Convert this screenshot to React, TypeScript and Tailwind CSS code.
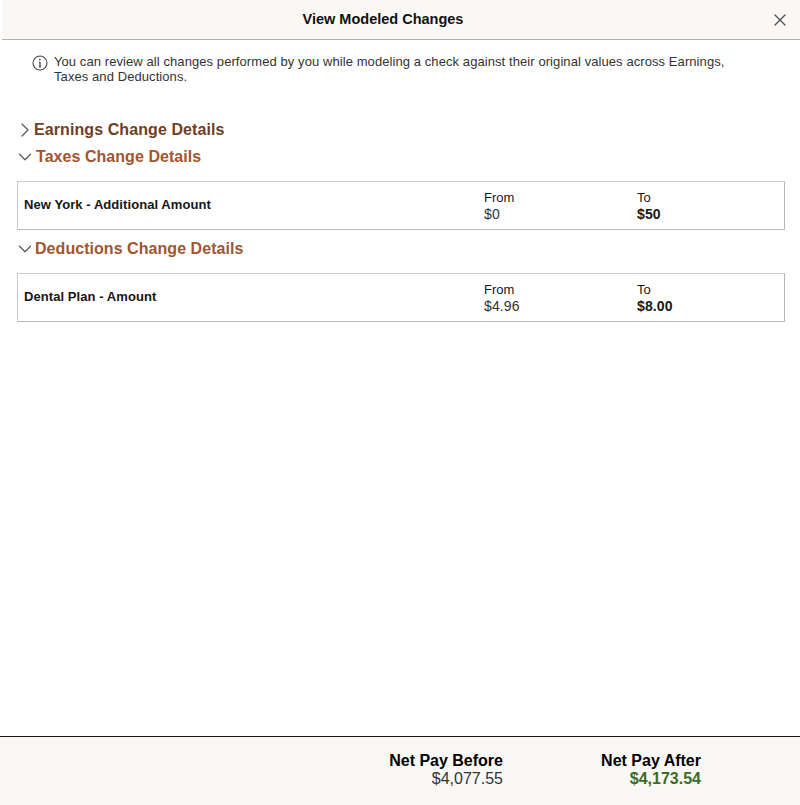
import { ChevronDown, ChevronRight, X } from "lucide-react";

const font = "[font-family:'Liberation_Sans',Arial,sans-serif]";

function InfoIcon() {
  return (
    <svg width="16" height="16" viewBox="0 0 16 16" fill="none" stroke="#4a4a4a" className="shrink-0 mt-[1px]">
      <circle cx="8" cy="8" r="7" strokeWidth="1.1" />
      <path d="M8 7v5" strokeWidth="1.4" />
      <path d="M6.8 12h2.4M6.8 7.2H8" strokeWidth="0.9" />
      <circle cx="7.9" cy="4.6" r="0.9" fill="#4a4a4a" stroke="none" />
    </svg>
  );
}

function ChangeRow({ label, from, to }: { label: string; from: string; to: string }) {
  return (
    <div className="ml-[17px] mr-[15px] h-[49px] border border-[#cbcdd0] border-b-[#bab6b0] border-r-[#bab6b0] flex items-center text-[#161616]">
      <div className="w-[466px] pl-[6px] text-[13px] tracking-[0.07px] font-bold -mt-[2px]">{label}</div>
      <div className="w-[153px] text-[14px] leading-[16px]">
        <div className="text-[13px]">From</div>
        <div className="text-[#333] tracking-[0.1px]">{from}</div>
      </div>
      <div className="text-[14px] leading-[16px]">
        <div className="text-[13px]">To</div>
        <div className="font-bold tracking-[0.1px]">{to}</div>
      </div>
    </div>
  );
}

export default function App() {
  return (
    <div className={`${font} h-[805px] w-[800px] bg-white flex flex-col`}>
      <header className="ml-[2px] h-[40px] shrink-0 bg-[#f9f8f6] border-b border-[#b5b0a8] flex items-center relative">
        <div className="w-full text-center pr-[36px] text-[14.5px] font-bold text-[#111]">View Modeled Changes</div>
        <button className="absolute right-[10px] top-[10px] text-[#555]">
          <X size={20} strokeWidth={1.6} />
        </button>
      </header>

      <main className="flex-1">
        <div className="flex gap-[6px] pl-[32px] pt-[14px] pr-[70px] text-[13px] leading-[15px] text-[#333] tracking-[0.08px]">
          <InfoIcon />
          <p>
            You can review all changes performed by you while modeling a check against their original values across Earnings, Taxes and Deductions.
          </p>
        </div>

        <div className="flex items-center pl-[13px] mt-[34px] h-[24px] text-[16px] tracking-[0.09px] font-bold text-[#6f3f24]">
          <ChevronRight size={24} strokeWidth={1.2} className="text-[#555] -mr-[3px]" />
          <span>Earnings Change Details</span>
        </div>
        <div className="flex items-center pl-[14px] mt-[3px] h-[24px] text-[16px] tracking-[0.05px] font-bold text-[#a0562f]">
          <ChevronDown size={22} strokeWidth={1.3} className="text-[#555]" />
          <span>Taxes Change Details</span>
        </div>
        <div className="mt-[12px]">
          <ChangeRow label="New York - Additional Amount" from="$0" to="$50" />
        </div>
        <div className="flex items-center pl-[14px] mt-[7px] h-[24px] text-[16px] tracking-[0.05px] font-bold text-[#a0562f]">
          <ChevronDown size={22} strokeWidth={1.3} className="text-[#555] -mr-[1px]" />
          <span>Deductions Change Details</span>
        </div>
        <div className="mt-[12px]">
          <ChangeRow label="Dental Plan - Amount" from="$4.96" to="$8.00" />
        </div>
      </main>

      <footer className="h-[69px] shrink-0 bg-[#f9f8f6] border-t border-[#161616] flex justify-end pr-[99px] pt-[15px]">
        <div className="text-right w-[114px] mr-[98px]">
          <div className="text-[16px] leading-[18px] font-bold text-[#000]">Net Pay Before</div>
          <div className="text-[16px] leading-[18px] text-[#333]">$4,077.55</div>
        </div>
        <div className="text-right w-[100px]">
          <div className="text-[16px] leading-[18px] font-bold text-[#000]">Net Pay After</div>
          <div className="text-[16px] leading-[18px] font-bold text-[#3f6b23]">$4,173.54</div>
        </div>
      </footer>
    </div>
  );
}
